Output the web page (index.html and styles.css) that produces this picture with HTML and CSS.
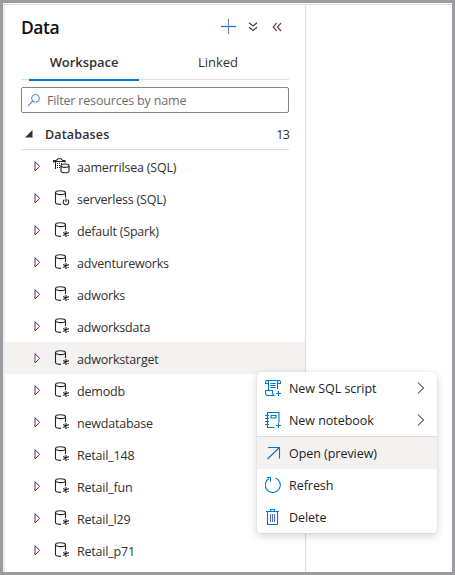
FILE: index.html
```
<!DOCTYPE html>
<html lang="en">
<head>
<meta charset="utf-8">
<title>Data</title>
<link rel="stylesheet" href="styles.css">
</head>
<body>
<svg class="defs" width="0" height="0">
  <symbol id="arrow" viewBox="0 0 7 11"><path d="M1 .7v9.300L5.700 5.350z" fill="#fff" stroke="#6b2a6e" stroke-width="1"/></symbol>
  <symbol id="spark" viewBox="0 0 17 16"><g fill="none" stroke="#222" stroke-width="1.100"><ellipse cx="7.500" cy="2.700" rx="5" ry="1.900"/><path d="M2.500 2.500v10c0 1.200 2 1.900 5.500 1.900M12.500 2.500v5.500"/></g><path d="M13 9v6M10.200 10.500l5.600 3M10.200 13.500l5.600-3" stroke="#222" stroke-width="1.200"/></symbol>
  <symbol id="serverless" viewBox="0 0 17 16"><g fill="none" stroke="#222" stroke-width="1.100"><ellipse cx="7.500" cy="2.700" rx="5" ry="1.900"/><path d="M2.500 2.500v10c0 1.200 2 1.900 5.500 1.900M12.500 2.500v5M11.300 9.700a2.800 2.800 0 1 0 3.400 0M13 8.300v4"/></g></symbol>
  <symbol id="pool" viewBox="0 0 17 16"><g fill="none" stroke="#222" stroke-width="1.100"><path d="M.5 4.500V2.800L3.500 2.300 5 .700h3l1.500 1.600 2.500.5v1.700M.5 3.500h11.500M2.500 4v7"/><path d="M4 5.500h5M4 7.500h4M4 9.500h3" stroke-dasharray="1 1"/><ellipse cx="12" cy="7.700" rx="4" ry="1.700"/><path d="M8 7.700v5.300c0 2.400 8 2.400 8 0V7.700"/></g></symbol>
  <symbol id="chev" viewBox="0 0 8 12"><path d="M1 .7l5.500 5.300L1 11.300" fill="none" stroke="#81564e" stroke-width="1.100"/></symbol>
</svg>
<div class="window">
  <aside class="panel">
    <header class="head">
      <h1>Data</h1>
      <svg class="plus" width="16" height="16" viewBox="0 0 16 16"><path d="M0 7.500h15" stroke="#0078d4" stroke-width="1.200"/><path d="M7.500 0v15" stroke="#6a78d8"/></svg>
      <svg class="down" width="10" height="10" viewBox="0 0 10 10"><path d="M1 .8L5 4l4-3.200M1 5.300l4 3.200 4-3.200" fill="none" stroke="#484644" stroke-width="1.300"/></svg>
      <svg class="left" width="10" height="10" viewBox="0 0 10 10"><path d="M4.700 1L1.200 5l3.500 4M9 1L5.500 5 9 9" fill="none" stroke="#6b4a46" stroke-width="1.200"/></svg>
    </header>
    <nav class="tabs"><span class="tab active">Workspace</span><span class="tab linked">Linked</span></nav>
    <div class="filter">
      <svg width="14" height="14" viewBox="0 0 14 14"><circle cx="8.500" cy="5.300" r="3.900" fill="none" stroke="#4f7fcb"/><path d="M5.700 8.200L1 12.800" stroke="#4f7fcb" stroke-width="1.100"/></svg>
      <span>Filter resources by name</span>
    </div>
    <div class="group">
      <svg width="8" height="8" viewBox="0 0 8 8"><path d="M7.500 0v7.500H0z" fill="#323130"/></svg>
      <span class="label">Databases</span><span class="count">13</span>
    </div>
    <ul class="tree">
      <li><svg class="arrow"><use href="#arrow"/></svg><svg class="icon"><use href="#pool"/></svg><span>aamerrilsea (SQL)</span></li>
      <li><svg class="arrow"><use href="#arrow"/></svg><svg class="icon"><use href="#serverless"/></svg><span>serverless (SQL)</span></li>
      <li><svg class="arrow"><use href="#arrow"/></svg><svg class="icon"><use href="#spark"/></svg><span>default (Spark)</span></li>
      <li><svg class="arrow"><use href="#arrow"/></svg><svg class="icon"><use href="#spark"/></svg><span>adventureworks</span></li>
      <li><svg class="arrow"><use href="#arrow"/></svg><svg class="icon"><use href="#spark"/></svg><span>adworks</span></li>
      <li><svg class="arrow"><use href="#arrow"/></svg><svg class="icon"><use href="#spark"/></svg><span>adworksdata</span></li>
      <li class="selected"><svg class="arrow"><use href="#arrow"/></svg><svg class="icon"><use href="#spark"/></svg><span>adworkstarget</span></li>
      <li><svg class="arrow"><use href="#arrow"/></svg><svg class="icon"><use href="#spark"/></svg><span>demodb</span></li>
      <li><svg class="arrow"><use href="#arrow"/></svg><svg class="icon"><use href="#spark"/></svg><span>newdatabase</span></li>
      <li><svg class="arrow"><use href="#arrow"/></svg><svg class="icon"><use href="#spark"/></svg><span>Retail_148</span></li>
      <li><svg class="arrow"><use href="#arrow"/></svg><svg class="icon"><use href="#spark"/></svg><span>Retail_fun</span></li>
      <li><svg class="arrow"><use href="#arrow"/></svg><svg class="icon"><use href="#spark"/></svg><span>Retail_l29</span></li>
      <li><svg class="arrow"><use href="#arrow"/></svg><svg class="icon"><use href="#spark"/></svg><span>Retail_p71</span></li>
    </ul>
  </aside>
  <div class="menu">
    <div class="item">
      <svg viewBox="0 0 16 16"><path d="M3.500 10.500V2.500q0-2-1.500-2h11.500q2 0 2 1.700v1.300h-2.500M12.500 .8v8.200M2 .5Q.5.5.5 2v1.500h3M5.500 3.500h5M5.500 5.500h5M5.500 7.500h5M8 10.500H.5v2.500q0 2.500 2.500 2.500h6.500q-2-.500-2-2.500v-2.500M13.500 11v5M11 13.500h5"/></svg>
      <span>New SQL script</span><svg class="chev"><use href="#chev"/></svg>
    </div>
    <div class="item">
      <svg viewBox="0 0 16 16"><path d="M9.500 15.500h-7V.500h11.500v10M6 3.500h5v2.500H6zM0 3.500h4M0 6.500h4M0 9.500h4M0 12.500h4M13.500 11v5M11 13.500h5"/></svg>
      <span>New notebook</span><svg class="chev"><use href="#chev"/></svg>
    </div>
    <div class="divider"></div>
    <div class="item hover">
      <svg viewBox="0 0 16 16"><path d="M3 2.500h11.500v11M14.500 2.500L2.500 14"/></svg>
      <span>Open (preview)</span>
    </div>
    <div class="item">
      <svg viewBox="0 0 16 16"><path d="M10.500 1a7.500 7.500 0 1 1-6.500.500M2 .5h3.500v4"/></svg>
      <span>Refresh</span>
    </div>
    <div class="item">
      <svg viewBox="0 0 16 16"><path d="M1 2.500h13M2.500 2.500v13h10v-13M5.500 2.500v-2h4v2"/><path d="M5.500 5v8M7.500 5v8M9.500 5v8" stroke="#5c6fd6"/></svg>
      <span>Delete</span>
    </div>
  </div>
</div>
</body>
</html>
```
FILE: styles.css
```
* { box-sizing: border-box; }
body {
  margin: 0;
  font: 12.5px/18px "Open Sans", "Noto Sans", sans-serif;
  color: #323130;
}
svg { display: block; flex: none; }
.defs { position: absolute; }
.window {
  position: relative;
  width: 455px;
  height: 575px;
  border: 3px solid #9c9ba0;
  background: #fff;
  overflow: hidden;
}
.window::before {
  content: "";
  display: block;
  height: 1px;
  margin-top: 1px;
  background: #dedede;
}
.panel {
  width: 303px;
  height: 569px;
  border-right: 1px solid #dcdcdc;
  border-left: 2px solid #eeedee;
}
.head {
  display: flex;
  align-items: center;
  height: 43px;
  padding: 0 23px 0 16px;
}
.head h1 {
  flex: 1;
  margin: 0;
  padding-top: 1px;
  color: #111;
  font-size: 17.5px;
  font-weight: 600;
  letter-spacing: -0.5px;
}
.plus { margin-right: 11px; }
.down { margin-right: 14px; }
.tabs {
  display: flex;
  height: 32px;
  margin: 0 16px;
  padding-left: 8px;
  background: linear-gradient(#dedede, #dedede) 0 31px / 100% 1px no-repeat;
}
.tab {
  width: 110px;
  height: 33px;
  padding-top: 5px;
  text-align: center;
  font-size: 13px;
}
.active {
  border-bottom: 2px solid #0078d4;
  font-weight: 600;
  letter-spacing: -0.05px;
}
.linked { margin-left: 24px; }
.filter {
  display: flex;
  align-items: center;
  gap: 6px;
  width: 268px;
  height: 26px;
  margin: 7px 0 0 16px;
  padding-left: 5px;
  border: 1px solid #858381;
  border-radius: 2px;
  color: #6f6d6b;
}
.filter span { padding-top: 2px; letter-spacing: -0.18px; }
.group {
  display: flex;
  align-items: center;
  height: 37px;
  margin: 0 16px;
  padding: 6px 0 0 4px;
  border-bottom: 1px solid #dcdcdc;
}
.label {
  margin-left: 12px;
  padding-top: 2px;
  font-weight: 600;
  letter-spacing: 0.15px;
}
.count { margin-left: auto; padding-top: 1px; letter-spacing: -0.8px; }
.tree {
  margin: 0;
  padding: 0;
  list-style: none;
}
.tree li {
  display: flex;
  align-items: center;
  height: 32px;
  padding: 2px 0 0 29px;
}
.tree .selected { background: #f3f2f1; }
.tree span { padding-top: 2px; letter-spacing: -0.2px; }
.arrow { width: 7px; height: 11px; margin: -2px 12px 0 0; }
.icon { width: 17px; height: 16px; margin: -2px 7px 0 0; }
.menu {
  position: absolute;
  left: 254px;
  top: 369px;
  width: 180px;
  height: 161px;
  border-radius: 4px;
  background: #fff;
  color: #201f1e;
  overflow: hidden;
  box-shadow: 0 3px 8px rgba(0, 0, 0, .17), 0 0 2px rgba(0, 0, 0, .1);
}
.item {
  display: flex;
  align-items: center;
  gap: 8px;
  height: 32px;
  padding: 0 12px 0 8px;
}
.item > svg:first-child {
  width: 16px;
  height: 16px;
  fill: none;
  stroke: #0078d4;
  stroke-width: 1.1;
}
.item .chev { width: 8px; height: 12px; margin-left: auto; }
.item span { padding-top: 1px; letter-spacing: -0.04px; }
.divider { height: 1px; background: #dcdcdc; }
.hover { background: #f3f2f1; }
```
